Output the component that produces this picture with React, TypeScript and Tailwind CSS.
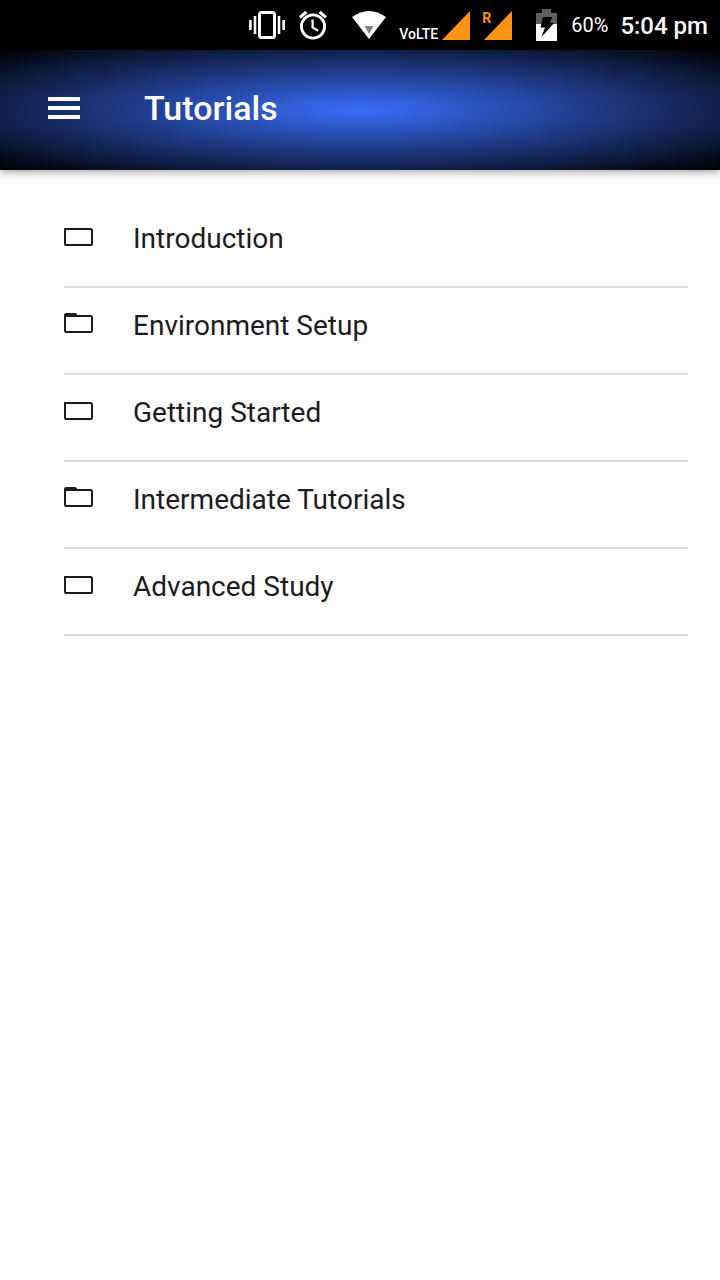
import { clsx } from "clsx";

const tutorials = [
  { label: "Introduction", tab: false },
  { label: "Environment Setup", tab: true },
  { label: "Getting Started", tab: false },
  { label: "Intermediate Tutorials", tab: true },
  { label: "Advanced Study", tab: false },
];

function VibrateIcon() {
  return (
    <svg width="36" height="28" viewBox="0 0 36 28" fill="none" stroke="#fff" aria-hidden="true">
      <rect x="10.5" y="1.5" width="15" height="25" rx="2" strokeWidth="3" />
      <path d="M6 5v18M30 5v18" strokeWidth="2.6" />
      <path d="M1.4 9v10M34.6 9v10" strokeWidth="2.6" />
    </svg>
  );
}

function AlarmIcon() {
  return (
    <svg width="28" height="30" viewBox="0 0 28 30" fill="none" stroke="#fff" aria-hidden="true">
      <circle cx="14" cy="16.5" r="11.6" strokeWidth="2.8" />
      <path d="M13.6 9.5v7.9l5.6 3.4" strokeWidth="2.3" />
      <path d="M1 7.4 7.4 2M27 7.4 20.6 2" strokeWidth="3" />
    </svg>
  );
}

function WifiIcon() {
  return (
    <svg width="36" height="28" viewBox="0 0 36 28" aria-hidden="true">
      <path d="M1 6Q18-6 35 6L18 28Z" fill="#fff" />
      <path d="M13.5 15h9L18 23Z" fill="#828282" />
    </svg>
  );
}

function SignalIcon() {
  return (
    <svg width="28" height="29" viewBox="0 0 28 29" aria-hidden="true">
      <path d="M28 0v29H0Z" fill="#ff9412" />
    </svg>
  );
}

function BatteryIcon() {
  return (
    <svg width="21" height="32" viewBox="0 0 21 32" aria-hidden="true">
      <path d="M6 0h9v4h6v11H0V4h6Z" fill="#5f5f5f" />
      <path d="M0 15h21v17H0Z" fill="#fff" />
      <path d="M7 8h9l-2 6h4L5.5 28 9 18.5H4.5Z" fill="#000" />
    </svg>
  );
}

function FolderIcon({ tab }: { tab: boolean }) {
  return (
    <svg width="29" height="20" viewBox="0 0 29 20" fill="none" aria-hidden="true">
      {tab ? (
        <>
          <rect x="1" y="3" width="27" height="16" rx="1.6" stroke="#1d1c21" strokeWidth="2" />
          <path d="M0 5V2Q0 0 2 0h9q1.6 0 2.3 2L15 4H2Z" fill="#1d1c21" />
        </>
      ) : (
        <>
          <rect x="1" y="2" width="27" height="16" rx="1.6" stroke="#1d1c21" strokeWidth="2" />
          <path d="M0 4V1h14v2H2Z" fill="#1d1c21" />
        </>
      )}
    </svg>
  );
}

function StatusBar() {
  return (
    <div className="flex h-[50px] items-center justify-end bg-black pr-3 text-white">
      <VibrateIcon />
      <div className="ml-3.5">
        <AlarmIcon />
      </div>
      <div className="ml-6">
        <WifiIcon />
      </div>
      <div className="ml-3 flex items-end gap-1">
        <span className="text-sm leading-3 font-medium">VoLTE</span>
        <SignalIcon />
      </div>
      <div className="relative ml-3.5">
        <span className="absolute top-0 -left-0.5 text-sm leading-[14px] font-bold text-[#ff9412]">R</span>
        <SignalIcon />
      </div>
      <div className="ml-6">
        <BatteryIcon />
      </div>
      <span className="ml-3.5 text-xl">60%</span>
      <span className="ml-3 pt-0.5 text-2xl font-medium">5:04 pm</span>
    </div>
  );
}

function Header() {
  return (
    <header className="flex h-[120px] items-center bg-[radial-gradient(#396efa,#000)] pb-1 pl-12 text-white shadow-[0_2px_8px_rgba(0,0,0,0.35)]">
      <button type="button" aria-label="Menu" className="flex w-8 flex-col gap-[5px]">
        <span className="h-1 w-full bg-white" />
        <span className="h-1 w-full bg-white" />
        <span className="h-1 w-full bg-white" />
      </button>
      <h1 className="ml-16 text-[34px] leading-10 font-medium">Tutorials</h1>
    </header>
  );
}

export default function App() {
  return (
    <div className="min-h-screen bg-[#fdfdfd] font-['Roboto',sans-serif]">
      <StatusBar />
      <Header />
      <main className="pt-[31px] pr-8 pl-16">
        <ul>
          {tutorials.map((item) => (
            <li key={item.label} className="border-b-2 border-[#dbdbdd]">
              <a href="#" className="flex items-start gap-10 pt-5 pb-[29px] text-[#1d1c21]">
                <span className={clsx("flex", item.tab ? "pt-[5px]" : "pt-1.5")}>
                  <FolderIcon tab={item.tab} />
                </span>
                <span className="text-[28px] leading-9">{item.label}</span>
              </a>
            </li>
          ))}
        </ul>
      </main>
    </div>
  );
}
